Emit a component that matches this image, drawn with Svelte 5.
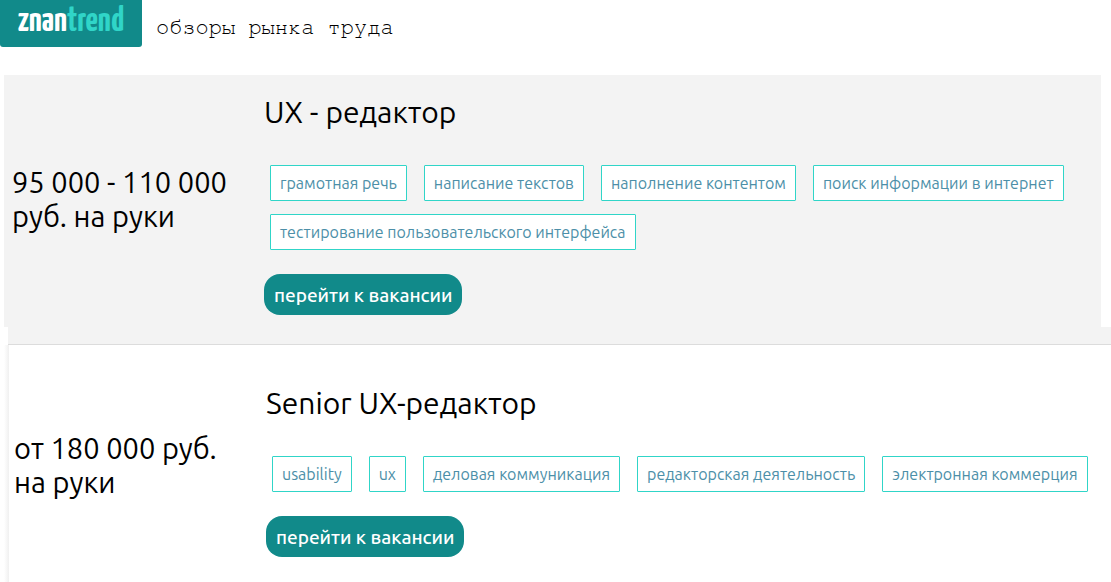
<script lang="ts">
    type Vacancy = {
        title: string;
        salary: string;
        skills: string[];
        highlighted: boolean;
    };

    let vacancies: Vacancy[] = [
        {
            title: "UX - редактор",
            salary: "95 000 - 110 000 руб. на руки",
            skills: [
                "грамотная речь",
                "написание текстов",
                "наполнение контентом",
                "поиск информации в интернет",
                "тестирование пользовательского интерфейса",
            ],
            highlighted: true,
        },
        {
            title: "Senior UX-редактор",
            salary: "от 180 000 руб. на руки",
            skills: [
                "usability",
                "ux",
                "деловая коммуникация",
                "редакторская деятельность",
                "электронная коммерция",
            ],
            highlighted: false,
        },
    ];
</script>

<header>
    <a class="logo" href="/">znan<span>trend</span></a>
    <p class="slogan">обзоры рынка труда</p>
</header>

<main>
    {#each vacancies as vacancy}
        <article class:highlighted={vacancy.highlighted}>
            <div class="vacancy">
                <p class="salary">{vacancy.salary}</p>
                <div class="info">
                    <h2>{vacancy.title}</h2>
                    <ul>
                        {#each vacancy.skills as skill}
                            <li>{skill}</li>
                        {/each}
                    </ul>
                    <button type="button">перейти к вакансии</button>
                </div>
            </div>
        </article>
        {#if vacancy.highlighted}
            <div class="divider"></div>
        {/if}
    {/each}
</main>

<style>
    :global(body) {
        background: #fff;
        color: #000;
        font-family: Ubuntu, "Noto Sans", sans-serif;
    }

    header {
        display: flex;
        align-items: flex-start;
        gap: 14px;
        margin-bottom: 28px;
    }

    .logo {
        box-sizing: border-box;
        width: 142px;
        height: 47px;
        padding-left: 18px;
        border-radius: 0 0 3px 3px;
        background: #118a8a;
        color: #fff;
        font-family: "Yanone Kaffeesatz", "Liberation Sans Narrow", sans-serif;
        font-size: 36px;
        font-weight: 700;
        line-height: 44px;
        text-decoration: none;
    }

    .logo span {
        color: #30d5c8;
    }

    .slogan {
        margin: 14px 0 0;
        font-family: FreeMono, "Nimbus Mono PS", "Courier New", "Liberation Mono", monospace;
        font-size: 22px;
        line-height: 26px;
    }

    article {
        padding-left: 9px;
        background: linear-gradient(to right, #fff 4px, #f0f0f0 9px) no-repeat;
        background-size: 9px 100%;
    }

    .highlighted {
        margin-right: 10px;
        padding-left: 4px;
        background: none;
    }

    .vacancy {
        display: grid;
        grid-template-columns: 252px 1fr;
        align-items: center;
        padding: 40px 0 26px 5px;
        background: #fff;
    }

    .highlighted .vacancy {
        padding: 19px 0 12px 8px;
        background: #f3f3f3;
    }

    .divider {
        height: 17px;
        margin-left: 8px;
        border-bottom: 1px solid #dcdcdc;
        background: #f3f3f3;
    }

    .salary {
        width: 230px;
        margin: 0;
        padding-bottom: 12px;
        font-size: 29px;
        line-height: 34px;
    }

    h2 {
        margin: 0 0 35px;
        font-size: 30px;
        font-weight: 400;
        line-height: 36px;
    }

    ul {
        display: flex;
        flex-wrap: wrap;
        gap: 13px 17px;
        margin: 0 0 24px;
        padding: 0 0 0 6px;
        list-style: none;
    }

    li {
        padding: 0 9px;
        border: 1px solid #30d5c8;
        border-radius: 1px;
        background: #fff;
        color: #4c8fa8;
        font-size: 16px;
        line-height: 34px;
        white-space: nowrap;
    }

    button {
        height: 41px;
        padding: 0 10px;
        border: 0;
        border-radius: 16px;
        background: #118a8a;
        color: #fff;
        font-family: inherit;
        font-size: 19px;
        font-weight: 500;
        cursor: pointer;
    }
</style>
